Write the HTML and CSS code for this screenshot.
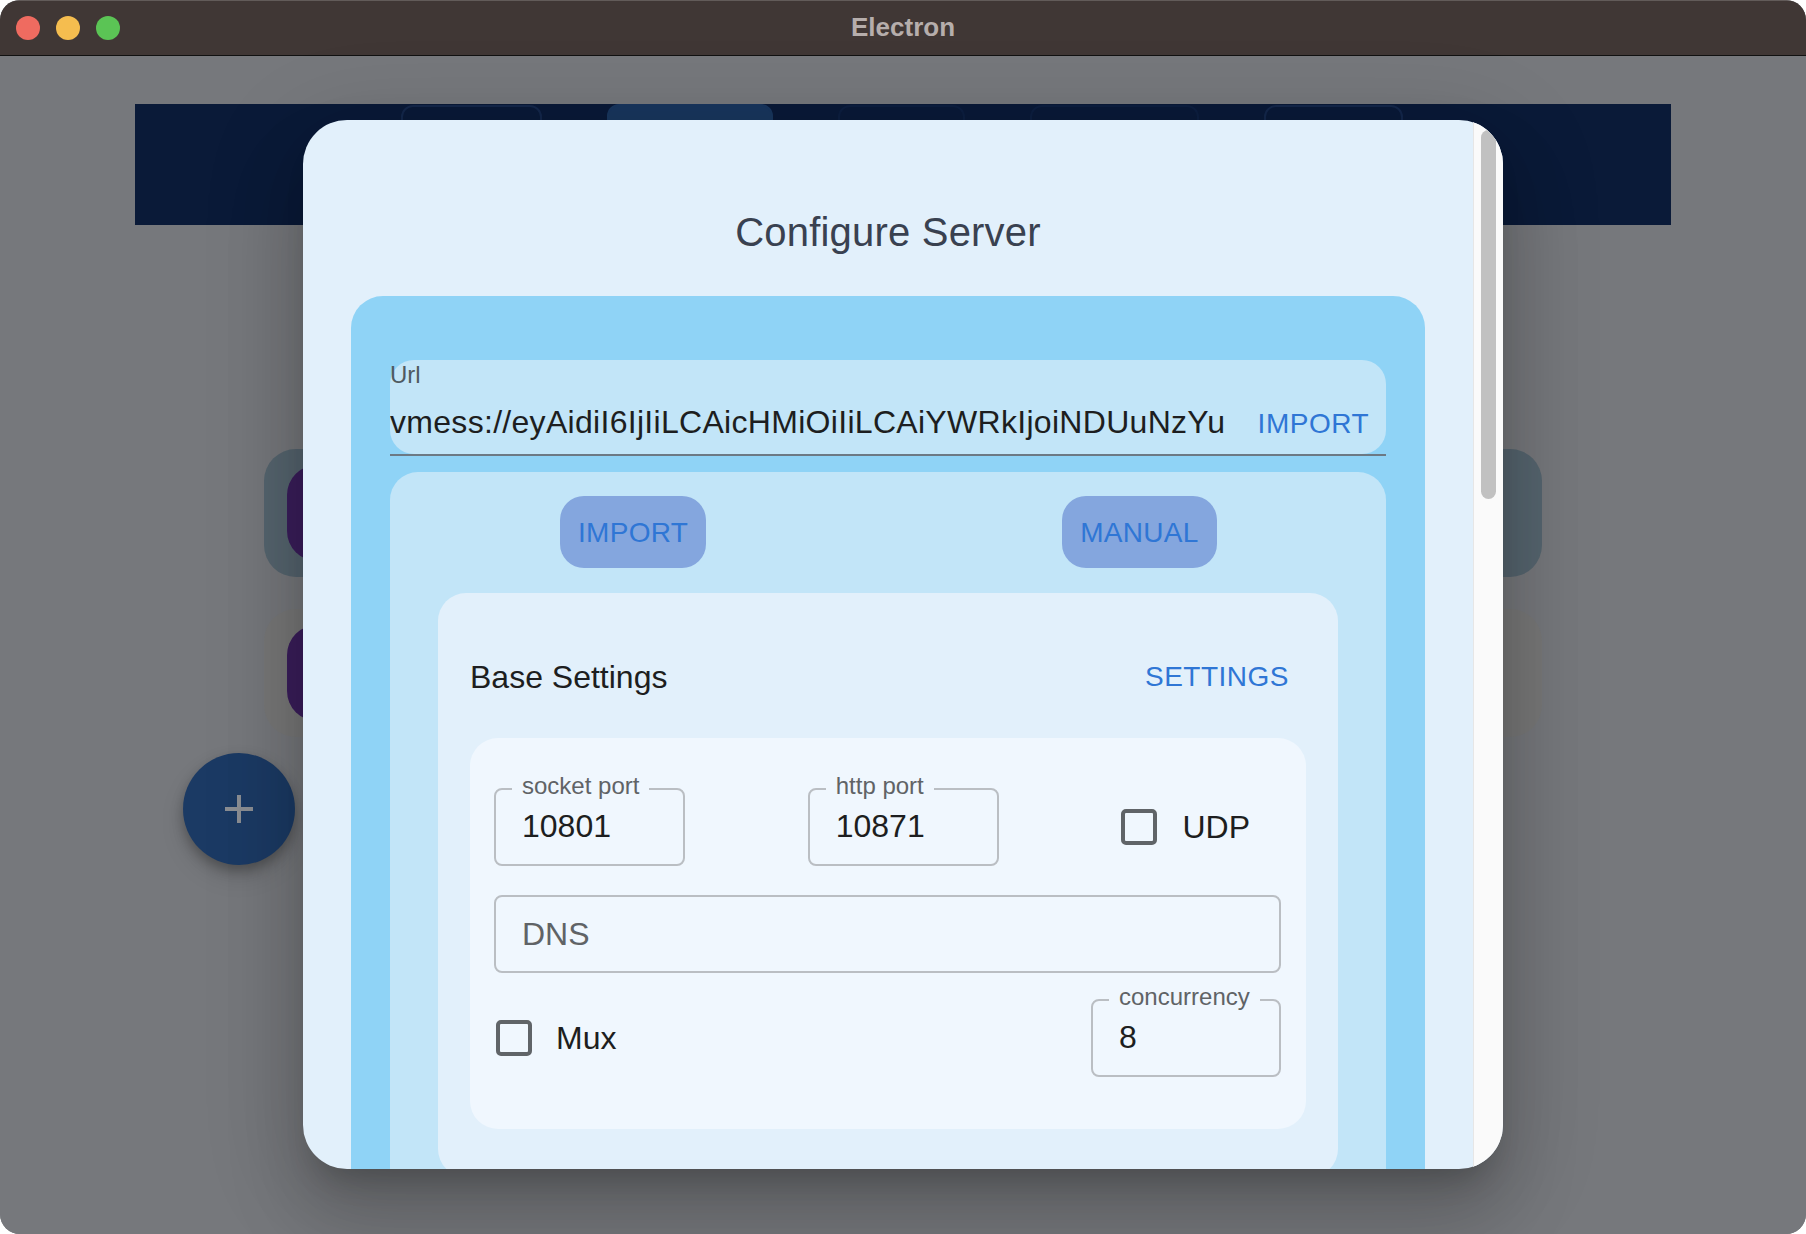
FILE: index.html
```html
<!DOCTYPE html>
<html>
<head>
<meta charset="utf-8">
<title>Electron</title>
<link rel="stylesheet" href="styles.css">
</head>
<body>
<div class="window">
  <header class="titlebar">
    <div class="lights">
      <span class="light red"></span>
      <span class="light yellow"></span>
      <span class="light green"></span>
    </div>
    <div class="title">Electron</div>
    <div></div>
  </header>
  <main class="content">
    <div class="app">
      <nav class="navbar">
        <span class="tab t1"></span>
        <span class="tab active t2"></span>
        <span class="tab t3"></span>
        <span class="tab t4"></span>
        <span class="tab t5"></span>
      </nav>
      <div class="server-list">
        <div class="server-card blue"><span class="avatar"></span></div>
        <div class="server-card gray"><span class="avatar"></span></div>
      </div>
      <button class="fab" type="button">
        <svg width="28" height="28" viewBox="0 0 28 28"><path d="M14 0V28M0 14H28" stroke="#8b8e93" stroke-width="4" fill="none"/></svg>
      </button>
    </div>

    <div class="dialog">
      <div class="dialog-body">
        <h2 class="dialog-title">Configure Server</h2>
        <section class="outer-panel">
          <div class="url-wrap">
            <div class="url-field">
              <div class="url-text">
                <div class="url-label">Url</div>
                <div class="url-value">vmess://eyAidiI6IjIiLCAicHMiOiIiLCAiYWRkIjoiNDUuNzYu</div>
              </div>
              <span class="text-btn url-import">IMPORT</span>
            </div>
          </div>
          <div class="inner-panel">
            <div class="mode-row">
              <span class="mode-btn">IMPORT</span>
              <span class="mode-btn">MANUAL</span>
            </div>
            <div class="settings-card">
              <div class="settings-head">
                <span class="settings-title">Base Settings</span>
                <span class="text-btn settings-btn">SETTINGS</span>
              </div>
              <div class="fields">
                <div class="field-row">
                  <fieldset class="outlined port"><legend>socket port</legend><span class="val">10801</span></fieldset>
                  <fieldset class="outlined port"><legend>http port</legend><span class="val">10871</span></fieldset>
                  <div class="check udp"><span class="box"></span><span class="check-text">UDP</span></div>
                </div>
                <div class="dns">DNS</div>
                <div class="field-row last">
                  <div class="check mux"><span class="box"></span><span class="check-text">Mux</span></div>
                  <fieldset class="outlined conc"><legend>concurrency</legend><span class="val">8</span></fieldset>
                </div>
              </div>
            </div>
          </div>
        </section>
      </div>
      <div class="scrollbar"><span class="thumb"></span></div>
    </div>
  </main>
</div>
</body>
</html>
```

FILE: styles.css
```css
html, body {
  margin: 0;
  padding: 0;
  background: #ffffff;
}

body {
  font-family: "Liberation Sans", Arial, sans-serif;
}

.window {
  width: 1806px;
  height: 1234px;
  border-radius: 20px;
  overflow: hidden;
  background: #76787c;
  display: flex;
  flex-direction: column;
}

/* ---------- title bar ---------- */
.titlebar {
  height: 55px;
  flex: none;
  background: #403735;
  border-bottom: 1px solid #111;
  box-shadow: inset 0 1px 0 rgba(255, 255, 255, 0.18);
  display: grid;
  grid-template-columns: 1fr auto 1fr;
  align-items: center;
}

.lights {
  display: flex;
  gap: 16px;
  padding-left: 16px;
}

.light {
  width: 24px;
  height: 24px;
  border-radius: 50%;
}

.light.red { background: #ef6b60; }
.light.yellow { background: #f5bd4f; }
.light.green { background: #5bc455; }

.title {
  font-size: 26px;
  font-weight: 700;
  color: #b6aeac;
  line-height: 30px;
  margin-top: -2px;
}

/* ---------- dimmed app underneath ---------- */
.content {
  flex: 1;
  position: relative;
  background: #76787c;
}

.app {
  padding: 48px 135px 0;
}

.navbar {
  height: 121px;
  background: #0a1a38;
  display: flex;
  align-items: flex-start;
  gap: 65px;
  padding-left: 266px;
  overflow: hidden;
}

.tab {
  flex: none;
  height: 80px;
  border-radius: 12px;
  box-sizing: border-box;
  border: 2px solid #14274b;
  margin-top: 1px;
}

.tab.t1 { width: 141px; }
.tab.t2 { width: 166px; }
.tab.t3 { width: 127px; border-color: #0d1f40; }
.tab.t4 { width: 169px; border-color: #0d1f40; }
.tab.t5 { width: 139px; }

.tab.active {
  background: #19365e;
  border-color: #19365e;
  margin-top: 0;
}

.server-list {
  margin: 224px 129px 0;
  display: flex;
  flex-direction: column;
  gap: 32px;
}

.server-card {
  height: 128px;
  border-radius: 32px;
  box-sizing: border-box;
  padding: 16px 23px;
}

.server-card.blue { background: #56656f; }
.server-card.gray { background: #787878; }

.avatar {
  display: block;
  width: 200px;
  height: 96px;
  border-radius: 30px;
  background: #3b1e5c;
}

.fab {
  position: absolute;
  left: 183px;
  top: 697px;
  width: 112px;
  height: 112px;
  border: none;
  padding: 0;
  border-radius: 50%;
  background: #1b3a64;
  box-shadow: 0 6px 12px rgba(0, 0, 0, 0.25), 0 12px 24px rgba(0, 0, 0, 0.12);
  display: flex;
  align-items: center;
  justify-content: center;
}

/* ---------- dialog ---------- */
.dialog {
  position: absolute;
  left: 303px;
  top: 64px;
  width: 1200px;
  height: 1049px;
  border-radius: 44px;
  overflow: hidden;
  background: #e2f0fb;
  display: flex;
  box-shadow: 0 22px 30px -14px rgba(0, 0, 0, 0.2),
              0 48px 76px 6px rgba(0, 0, 0, 0.14),
              0 18px 92px 16px rgba(0, 0, 0, 0.12);
}

.dialog-body {
  width: 1170px;
  flex: none;
  overflow: hidden;
}

.scrollbar {
  flex: 1;
  background: #fafafa;
  border-left: 1px solid #e6e6e6;
  padding: 10px 7px 0 7px;
}

.thumb {
  display: block;
  width: 15px;
  height: 369px;
  border-radius: 8px;
  background: #c1c1c1;
}

.dialog-title {
  margin: 0;
  padding-top: 88px;
  font-size: 40px;
  line-height: 48px;
  font-weight: 400;
  letter-spacing: 0.2px;
  text-align: center;
  color: #394150;
}

.outer-panel {
  margin: 40px 48px 0;
  background: #8fd3f6;
  border-radius: 32px 32px 0 0;
  padding: 64px 39px 0;
}

.url-wrap {
  border-bottom: 2px solid #6c7984;
}

.url-field {
  background: #c2e5f8;
  border-radius: 24px;
  padding: 3px 17px 12px 0;
  display: flex;
  align-items: flex-end;
}

.url-text {
  flex: 1;
  min-width: 0;
}

.url-label {
  font-size: 24px;
  line-height: 24px;
  color: #4f5a61;
  margin-bottom: 15px;
}

.url-value {
  font-size: 32px;
  line-height: 40px;
  letter-spacing: 0.3px;
  color: #1d1e20;
  white-space: nowrap;
  overflow: hidden;
}

.text-btn {
  font-size: 28px;
  line-height: 36px;
  letter-spacing: 0.5px;
  color: #2f76d5;
  white-space: nowrap;
}

.url-import {
  margin-left: 30px;
}

.inner-panel {
  margin-top: 16px;
  background: #c2e5f8;
  border-radius: 28px 28px 0 0;
  padding: 24px 48px 0;
}

.mode-row {
  display: flex;
  gap: 356px;
  padding-left: 122px;
}

.mode-btn {
  height: 72px;
  line-height: 74px;
  padding: 0 18px;
  border-radius: 24px;
  background: #84a6de;
  font-size: 28px;
  letter-spacing: 0.3px;
  color: #2f76d5;
}

.settings-card {
  margin-top: 25px;
  background: #e2f0fb;
  border-radius: 28px;
  padding: 48px 32px 48px;
}

.settings-head {
  height: 72px;
  display: flex;
  align-items: center;
  justify-content: space-between;
  margin-bottom: 25px;
}

.settings-title {
  font-size: 32px;
  color: #1d1e20;
}

.settings-btn {
  padding-right: 17px;
}

.fields {
  background: #f0f7fe;
  border-radius: 28px;
  padding: 36px 25px 52px 24px;
}

.field-row {
  display: flex;
  justify-content: space-between;
  align-items: flex-end;
}

.outlined {
  margin: 0;
  min-width: 0;
  box-sizing: border-box;
  border: 2px solid #babec3;
  border-radius: 8px;
  padding: 3px 26px 18px;
}

.outlined.port { width: 191px; }
.outlined.conc { width: 190px; }

.outlined legend {
  margin-left: -10px;
  padding: 0 10px 5px;
  font-size: 24px;
  line-height: 24px;
  color: #606366;
}

.val {
  display: block;
  font-size: 32px;
  line-height: 40px;
  color: #1d1e20;
}

.check {
  height: 78px;
  display: flex;
  align-items: center;
  gap: 25px;
}

.check.udp { margin-right: 31px; }
.check.mux { margin-left: 2px; gap: 24px; }

.box {
  width: 36px;
  height: 36px;
  box-sizing: border-box;
  border: 4px solid #606468;
  border-radius: 5px;
}

.check-text {
  font-size: 32px;
  color: #1d1e20;
}

.dns {
  margin: 29px 0 12px;
  height: 78px;
  box-sizing: border-box;
  border: 2px solid #babec3;
  border-radius: 8px;
  padding-left: 26px;
  font-size: 32px;
  line-height: 74px;
  color: #606366;
}
```
